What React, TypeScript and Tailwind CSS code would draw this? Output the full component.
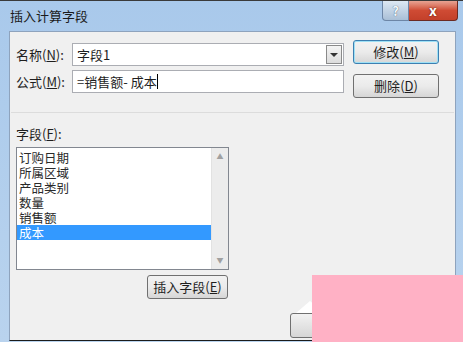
import React from "react";

const fields = ["订购日期", "所属区域", "产品类别", "数量", "销售额", "成本"];

const Btn: React.FC<{ label: string; hot: string; primary?: boolean; className?: string }> = ({ label, hot, primary, className }) => (
    <button
        className={`flex items-center justify-center rounded-[3px] border text-[13px] text-[#1e1e1e] bg-gradient-to-b from-[#f2f2f2] via-[#ebebeb] to-[#d6d6d6] ${primary ? "border-[#3c7fb1] shadow-[inset_0_0_0_1px_#9ee0f5]" : "border-[#707070]"} ${className ?? ""}`}
    >
        {label}(<span className="underline">{hot}</span>)
    </button>
);

export default function App() {
    return (
        <div
            className="relative w-[463px] h-[342px] overflow-hidden flex flex-col bg-gradient-to-b from-[#a9c9eb] to-[#b9d3ee] border-t border-[#3a3a3a]"
            style={{ fontFamily: '"Noto Sans CJK SC", "Noto Sans", sans-serif' }}
        >
            {/* title bar */}
            <div className="h-[30px] flex justify-between shrink-0">
                <span className="pl-[10px] pt-[6px] text-[13px] text-[#1b1b1b] leading-[18px]">插入计算字段</span>
                <div className="flex self-start mr-[5px]">
                    <div className="w-[27px] h-[20px] flex items-center justify-center rounded-bl-[4px] border border-t-0 border-[#6d86a6] bg-gradient-to-b from-[#dde8f3] to-[#a9bfd6] text-[13px] font-bold text-[#f4f8fc] [text-shadow:0_0_1px_#25384f]">?</div>
                    <div className="w-[49px] h-[20px] flex items-center justify-center rounded-br-[4px] border border-t-0 border-l-0 border-[#6b2a22] bg-gradient-to-b from-[#e7a393] via-[#cf4b34] to-[#c3402a] text-[14px] font-bold text-white [text-shadow:0_0_2px_#4b1208]">x</div>
                </div>
            </div>

            {/* body */}
            <div className="flex-1 ml-[9px] mr-[7px] mb-[1px] bg-[#f0f0f0] border border-[#8ea3bd] border-b-[#1b1b1b] flex flex-col text-[13px] text-[#1e1e1e]">
                <div className="flex pl-[6px] pt-[8px]">
                    <div className="flex flex-col w-[328px] pt-[3px] gap-[4px]">
                        <div className="flex items-center">
                            <span className="w-[56px]">名称(<span className="underline">N</span>):</span>
                            <div className="flex-1 h-[23px] bg-white border border-[#abadb3] flex items-center pl-[4px] pr-[1px]">
                                <span className="flex-1">字段1</span>
                                <div className="w-[16px] h-[19px] border border-[#8a8a8a] bg-gradient-to-b from-[#f4f4f4] to-[#dcdcdc] flex items-center justify-center">
                                    <div className="w-0 h-0 border-l-[4px] border-r-[4px] border-t-[4px] border-l-transparent border-r-transparent border-t-[#333]" />
                                </div>
                            </div>
                        </div>
                        <div className="flex items-center">
                            <span className="w-[56px]">公式(<span className="underline">M</span>):</span>
                            <div className="flex-1 h-[23px] bg-white border border-[#abadb3] flex items-center pl-[4px]">
                                <span>=销售额- 成本</span>
                                <span className="w-px h-[15px] bg-black" />
                            </div>
                        </div>
                    </div>
                    <div className="flex flex-col ml-[9px] gap-[10px]">
                        <Btn label="修改" hot="M" primary className="w-[86px] h-[24px]" />
                        <Btn label="删除" hot="D" className="w-[86px] h-[24px]" />
                    </div>
                </div>

                <div className="mt-[14px] mx-[1px] border-t border-[#dcdcdc]" />

                <div className="pl-[6px] pt-[12px] flex flex-col">
                    <span className="leading-[18px]">字段(<span className="underline">F</span>):</span>
                    <div className="mt-[4px] w-[213px] h-[123px] bg-white border border-[#828790] flex">
                        <div className="flex-1 flex flex-col pt-[2px] text-[12.5px] leading-[15px] text-[#2a2a2a]">
                            {fields.map((f, i) => (
                                <div
                                    key={f}
                                    className={`pl-[2px] h-[15px] ${i === fields.length - 1 ? "bg-[#3399ff] text-white" : ""}`}
                                >
                                    {f}
                                </div>
                            ))}
                        </div>
                        <div className="w-[17px] bg-[#ececec] border-l border-[#e2e2e2] flex flex-col justify-between items-center py-[5px] text-[7px] text-[#a0a0a0] leading-none">
                            <span>▲</span>
                            <span>▼</span>
                        </div>
                    </div>
                    <Btn label="插入字段" hot="E" className="mt-[5px] ml-[131px] w-[81px] h-[24px]" />
                </div>
            </div>

            {/* partially covered bottom button */}
            <div className="absolute left-[290px] top-[312px] w-[40px] h-[25px] rounded-[3px] border border-[#707070] bg-gradient-to-b from-[#f2f2f2] to-[#d6d6d6]" />
            <div className="absolute left-[296px] top-[300px] w-0 h-0 border-l-[14px] border-r-[14px] border-b-[12px] border-l-transparent border-r-transparent border-b-white" />
            {/* pink overlay */}
            <div className="absolute left-[312px] top-[274px] w-[151px] h-[68px] bg-[#ffb1c5]" />
        </div>
    );
}
